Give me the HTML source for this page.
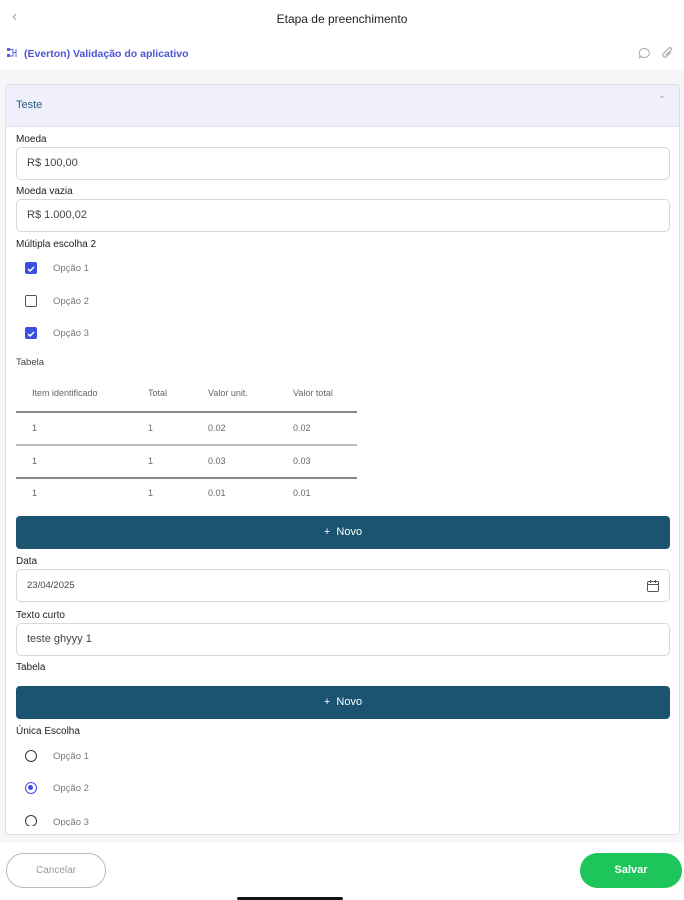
<!DOCTYPE html>
<html><head><meta charset="utf-8"><style>
*{box-sizing:border-box;margin:0;padding:0}
body{width:684px;height:900px;background:#fff;font-family:"Liberation Sans",sans-serif;position:relative;overflow:hidden;color:#222}
.a{position:absolute}
.lbl{position:absolute;left:16px;font-size:10px;color:#222}
.inp{position:absolute;left:16px;width:654px;height:33px;border:1px solid #d6d9dd;border-radius:5px;font-size:11px;color:#444;padding-left:10px;line-height:31px}
.cb{position:absolute;left:25px;width:12px;height:12px;border-radius:2px}
.on{background:#3d4fe0}
.off{border:1.5px solid #555}
.opt{position:absolute;left:53px;font-size:9.5px;color:#777}
.td{position:absolute;font-size:9px;color:#666}
.hr{position:absolute;left:16px;width:341px;height:2px;background:#888}
.btn{position:absolute;left:16px;width:654px;height:33px;background:#1a5470;border-radius:4px;color:#fff;font-size:11px;text-align:center;line-height:33px}
.rd{position:absolute;left:25px;width:12px;height:12px;border-radius:50%;border:1.5px solid #333}
</style></head><body>
<div class="a" style="left:12px;top:8px;font-size:16px;color:#aaa">‹</div>
<div class="a" style="left:0;width:684px;top:12px;text-align:center;font-size:12px;color:#222">Etapa de preenchimento</div>
<svg class="a" style="left:7px;top:47px" width="12" height="12" viewBox="0 0 12 12"><rect x="0" y="1" width="3" height="3" fill="#5560e0"/><rect x="0" y="7" width="3" height="3" fill="#5560e0"/><path d="M3 2.5H6V9H3M6 5.5H9M9 2v8" stroke="#5560e0" fill="none"/></svg>
<div class="a" style="left:24px;top:48px;font-size:10.5px;color:#4b55d6;font-weight:bold">(Everton) Validação do aplicativo</div>
<svg class="a" style="left:638px;top:47px" width="13" height="13" viewBox="0 0 13 13"><path d="M6.5 1.5a5 4.5 0 1 1-3 8.2L1.5 11l.6-2.6A5 4.5 0 0 1 6.5 1.5z" fill="none" stroke="#aaa"/></svg>
<svg class="a" style="left:661px;top:46px" width="13" height="14" viewBox="0 0 13 14"><path d="M10 6l-4.5 4.5a2 2 0 0 1-3-3L8 2a1.3 1.3 0 0 1 2 2L4.8 9.2" fill="none" stroke="#aaa" stroke-width="1.2"/></svg>
<div class="a" style="left:0;top:70px;width:684px;height:772px;background:#f6f6f8"></div>
<div class="a" style="left:5px;top:84px;width:675px;height:751px;background:#fff;border:1px solid #dcdde6;border-radius:5px;overflow:hidden">
 <div style="height:42px;background:#eff0fb;border-bottom:1px solid #e4e5ef;padding:14px 0 0 10px;font-size:11px;color:#2a5c80">Teste<span style="position:absolute;right:15px;top:10px;color:#999;font-size:11px">ˆ</span></div>
</div>
<div class="lbl" style="top:134px">Moeda</div>
<div class="inp" style="top:147px">R$ 100,00</div>
<div class="lbl" style="top:186px">Moeda vazia</div>
<div class="inp" style="top:199px">R$ 1.000,02</div>
<div class="lbl" style="top:239px">Múltipla escolha 2</div>
<div class="cb on" style="top:262px"><svg width="12" height="12"><path d="M3 6l2 2 4-4" stroke="#fff" stroke-width="1.5" fill="none"/></svg></div><div class="opt" style="top:263px">Opção 1</div>
<div class="cb off" style="top:295px"></div><div class="opt" style="top:296px">Opção 2</div>
<div class="cb on" style="top:327px"><svg width="12" height="12"><path d="M3 6l2 2 4-4" stroke="#fff" stroke-width="1.5" fill="none"/></svg></div><div class="opt" style="top:328px">Opção 3</div>
<div class="lbl" style="top:357px;font-size:9.5px;color:#444">Tabela</div>
<div class="td" style="left:32px;top:388px">Item identificado</div><div class="td" style="left:148px;top:388px">Total</div><div class="td" style="left:208px;top:388px">Valor unit.</div><div class="td" style="left:293px;top:388px">Valor total</div>
<div class="hr" style="top:411px"></div>
<div class="td" style="left:32px;top:423px">1</div><div class="td" style="left:148px;top:423px">1</div><div class="td" style="left:208px;top:423px">0.02</div><div class="td" style="left:293px;top:423px">0.02</div>
<div class="hr" style="top:444px;background:#bbb"></div>
<div class="td" style="left:32px;top:456px">1</div><div class="td" style="left:148px;top:456px">1</div><div class="td" style="left:208px;top:456px">0.03</div><div class="td" style="left:293px;top:456px">0.03</div>
<div class="hr" style="top:477px"></div>
<div class="td" style="left:32px;top:488px">1</div><div class="td" style="left:148px;top:488px">1</div><div class="td" style="left:208px;top:488px">0.01</div><div class="td" style="left:293px;top:488px">0.01</div>
<div class="btn" style="top:516px">+&nbsp;&nbsp;Novo</div>
<div class="lbl" style="top:556px">Data</div>
<div class="inp" style="top:569px;font-size:9.5px">23/04/2025</div>
<svg class="a" style="left:646px;top:579px" width="14" height="14" viewBox="0 0 14 14"><rect x="1.5" y="2.5" width="11" height="10" rx="1.5" fill="none" stroke="#555"/><path d="M1.5 5.5h11M4.5 1v3M9.5 1v3" stroke="#555"/></svg>
<div class="lbl" style="top:610px">Texto curto</div>
<div class="inp" style="top:623px">teste ghyyy 1</div>
<div class="lbl" style="top:662px">Tabela</div>
<div class="btn" style="top:686px">+&nbsp;&nbsp;Novo</div>
<div class="lbl" style="top:726px">Única Escolha</div>
<div class="rd" style="top:750px"></div><div class="opt" style="top:751px">Opção 1</div>
<div class="rd" style="top:782px;border-color:#3d4fe0"><div style="margin:2px;width:5px;height:5px;border-radius:50%;background:#3d4fe0"></div></div><div class="opt" style="top:783px">Opção 2</div>
<div class="a" style="left:5px;top:812px;width:675px;height:14px;overflow:hidden"><div class="rd" style="left:20px;top:3px"></div><div class="opt" style="left:48px;top:5px">Opção 3</div></div>
<div class="a" style="left:6px;top:853px;width:100px;height:35px;border:1.5px solid #bbb;border-radius:18px;text-align:center;line-height:33px;font-size:10px;color:#999">Cancelar</div>
<div class="a" style="left:580px;top:853px;width:102px;height:35px;background:#1ec55a;border-radius:18px;text-align:center;line-height:35px;font-size:11px;color:#fff;font-weight:bold">Salvar</div>
<div class="a" style="left:237px;top:897px;width:106px;height:3px;background:#111;border-radius:2px"></div>
</body></html>
